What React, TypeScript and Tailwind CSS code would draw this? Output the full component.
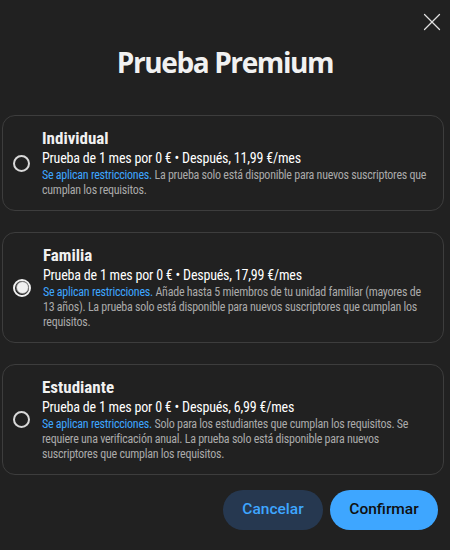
import { X } from 'lucide-react';

type Plan = {
  name: string;
  price: string;
  note: string;
};

const plans: Plan[] = [
  {
    name: 'Individual',
    price: 'Prueba de 1 mes por 0 € • Después, 11,99 €/mes',
    note: 'La prueba solo está disponible para nuevos suscriptores que cumplan los requisitos.',
  },
  {
    name: 'Familia',
    price: 'Prueba de 1 mes por 0 € • Después, 17,99 €/mes',
    note: 'Añade hasta 5 miembros de tu unidad familiar (mayores de 13 años). La prueba solo está disponible para nuevos suscriptores que cumplan los requisitos.',
  },
  {
    name: 'Estudiante',
    price: 'Prueba de 1 mes por 0 € • Después, 6,99 €/mes',
    note: 'Solo para los estudiantes que cumplan los requisitos. Se requiere una verificación anual. La prueba solo está disponible para nuevos suscriptores que cumplan los requisitos.',
  },
];

function Radio({ checked }: { checked: boolean }) {
  if (checked) {
    return (
      <span className="flex h-[18px] w-[18px] shrink-0 items-center justify-center rounded-full border-2 border-[#f1f1f1]">
        <span className="h-[11px] w-[11px] rounded-full bg-[#f1f1f1] ring-1 ring-[#888]" />
      </span>
    );
  }
  return <span className="h-[17px] w-[17px] shrink-0 rounded-full border-2 border-[#d9d9d9]" />;
}

export default function App() {
  const selected = 1;

  return (
    <div
      className="relative h-[550px] w-[450px] overflow-hidden bg-[#212121] text-[#f1f1f1]"
      style={{ fontFamily: '"Roboto Condensed", Roboto, "Liberation Sans", sans-serif' }}
    >
      <button className="absolute right-[3px] top-[7px] text-[#e0e0e0]">
        <X className="h-[30px] w-[30px]" strokeWidth={1} />
      </button>

      <h1
        className="pt-[44px] text-center text-[28px] font-bold leading-[36px] tracking-[-1.4px] text-[#f1f1f1]"
        style={{ fontFamily: '"Open Sans", sans-serif' }}
      >
        Prueba Premium
      </h1>

      <div className="mt-[35px] flex flex-col gap-[21px] pl-[2px] pr-[6px]">
        {plans.map((plan, i) => (
          <div
            key={plan.name}
            className="flex items-center gap-[12px] rounded-[13px] border border-[#3d3d3d] bg-[#212121] py-[12px] pl-[10px] pr-[14px]"
          >
            <Radio checked={i === selected} />
            <div className="flex flex-col">
              <span className="text-[17px] font-bold leading-[20px]">{plan.name}</span>
              <span className="text-[14px] font-normal leading-[20px] tracking-[-0.2px] text-white">
                {plan.price}
              </span>
              <p className="text-[12px] leading-[15px] tracking-[-0.25px] text-[#aaaaaa]">
                <span className="text-[#3ea6ff]">Se aplican restricciones.</span> {plan.note}
              </p>
            </div>
          </div>
        ))}
      </div>

      <div
        className="mt-[15px] flex justify-end gap-[7px] pr-[12px]"
        style={{ fontFamily: 'Roboto, "Liberation Sans", sans-serif' }}
      >
        <button className="h-[40px] w-[100px] rounded-full bg-[#263850] text-[15.5px] font-medium text-[#3ea6ff]">
          Cancelar
        </button>
        <button className="h-[40px] w-[108px] rounded-full bg-[#3ea6ff] text-[15.5px] font-medium text-[#0f0f0f]">
          Confirmar
        </button>
      </div>
    </div>
  );
}
